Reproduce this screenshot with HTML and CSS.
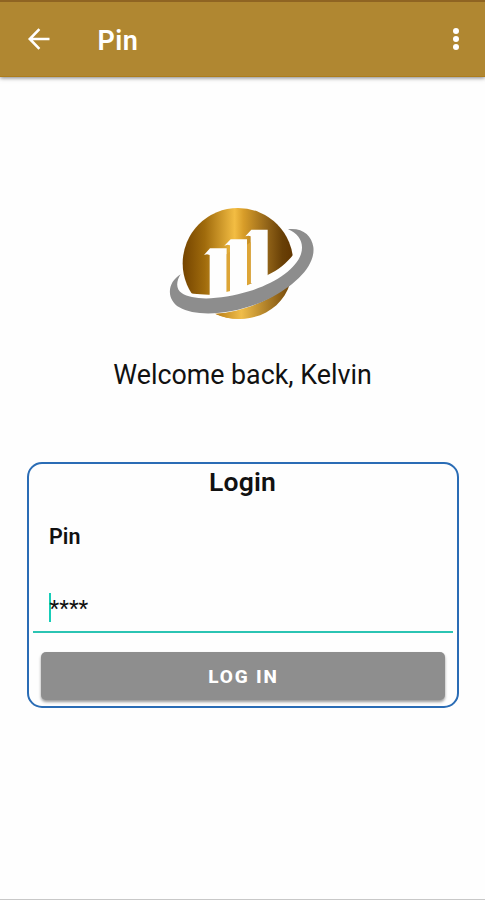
FILE: index.html
```html
<!DOCTYPE html>
<html lang="en">
<head>
    <meta charset="UTF-8">
    <title>Pin</title>
    <link rel="stylesheet" href="styles.css">
</head>
<body>
<div class="screen">
    <header class="bar">
        <svg class="back" viewBox="0 0 24 24">
            <path d="M22.5 12H3.2M12.4 2.2L2.8 12l9.6 9.8"/>
        </svg>
        <h1 class="title">Pin</h1>
        <svg class="more" viewBox="0 0 8 24">
            <circle cx="4" cy="4" r="3"/>
            <circle cx="4" cy="12" r="3"/>
            <circle cx="4" cy="20" r="3"/>
        </svg>
    </header>
    <main class="content">
        <svg class="logo" viewBox="0 0 495 405">
            <defs>
                <linearGradient id="gold" x1="0" y1="0" x2="1" y2="0">
                    <stop offset="0" stop-color="#744400"/>
                    <stop offset=".2" stop-color="#a06b0c"/>
                    <stop offset=".47" stop-color="#f3bd43"/>
                    <stop offset=".55" stop-color="#d89d29"/>
                    <stop offset=".76" stop-color="#936519"/>
                    <stop offset=".9" stop-color="#694006"/>
                    <stop offset="1" stop-color="#603500"/>
                </linearGradient>
                <linearGradient id="goldLow" x1="0" y1="0" x2="1" y2="0">
                    <stop offset="0" stop-color="#b67b16"/>
                    <stop offset=".35" stop-color="#f0bd49"/>
                    <stop offset="1" stop-color="#74480a"/>
                </linearGradient>
            </defs>
            <circle cx="234" cy="205" r="166" fill="url(#gold)"/>
            <!-- bars -->
            <g class="white">
                <path d="M132 180l18-20h50v145h-51V180l-8-2z"/>
                <path d="M193 152l19-19h49v160h-51V151l-7-2z"/>
                <path d="M256 124l18-20h49v160h-51V124l-7-2z"/>
            </g>
            <path class="edge" d="M200 178l10-8v118l-10 4zM261 149l11-8v124l-11 5z"/>
            <!-- gap between the globe and the ring -->
            <path class="white" d="M62 232C30 268 50 300 150 299C225 291 275 268 323 240C355 225 380 205 402 176L425 205L395 273C320 325 240 352 165 358L55 340L20 280z"/>
            <path d="M165 356C250 351 330 316 390 266C370 330 310 371 240 372C211 372 186 366 165 356z" fill="url(#goldLow)"/>
            <!-- ring -->
            <path class="ring" d="M62 238C48 259 47 283 66 295C99 318 188 314 267 289C344 265 407 224 423 177C433 145 418 116 384 103C428 98 455 122 460 156C467 211 408 270 325 312C239 355 116 371 58 337C18 312 21 263 62 238z"/>
        </svg>
        <p class="welcome">Welcome back, Kelvin</p>
        <section class="card">
            <h2 class="heading">Login</h2>
            <div class="label">Pin</div>
            <div class="field"><i class="caret"></i><span class="value">****</span></div>
            <button class="btn">LOG IN</button>
        </section>
    </main>
</div>
</body>
</html>
```

FILE: styles.css
```css
* {
    box-sizing: border-box;
    margin: 0;
    padding: 0;
}

body {
    font-family: Roboto, "Liberation Sans", sans-serif;
    color: #111;
    background: #fefefe;
}

.screen {
    display: flex;
    flex-direction: column;
    height: 900px;
    border-bottom: 1px solid #c8c8c8;
}

.bar {
    display: flex;
    align-items: center;
    height: 77px;
    padding: 0 25px 1px 27px;
    border-top: 2px solid #8f6422;
    border-bottom: 1px solid #ad7d1c;
    background: #b08731;
    box-shadow: 0 1px 4px rgba(0, 0, 0, .5);
}

.back {
    width: 24px;
    height: 24px;
    fill: none;
    stroke: #fff;
    stroke-width: 2.6;
}

.title {
    flex: 1;
    margin-left: 46.5px;
    padding-top: 4px;
    font-size: 27px;
    font-weight: 600;
    letter-spacing: .4px;
    line-height: 32px;
    color: #fff;
}

.more {
    width: 8px;
    height: 24px;
    fill: #fff;
}

.content {
    display: flex;
    flex-direction: column;
    align-items: center;
    padding-top: 118px;
}

.logo {
    width: 165px;
    height: 135px;
}

.white {
    fill: #fefefe;
}

.edge {
    fill: #dda536;
}

.ring {
    fill: #8d8d8d;
}

.welcome {
    margin-top: 29px;
    font-size: 26.8px;
    line-height: 32px;
}

.card {
    width: 432px;
    height: 246px;
    margin-top: 71px;
    padding: 0 4px;
    border: 2px solid #2a6cb5;
    border-radius: 15px;
}

.heading {
    font-size: 26.5px;
    font-weight: 600;
    letter-spacing: .2px;
    line-height: 36px;
    text-align: center;
}

.label {
    margin: 24px 0 0 16.5px;
    font-size: 21.5px;
    font-weight: 600;
    line-height: 26px;
}

.field {
    display: flex;
    align-items: center;
    height: 52px;
    margin-top: 31px;
    padding: 2px 0 0 16px;
    border-bottom: 2px solid #2bc4b3;
}

.caret {
    width: 2px;
    height: 29px;
    margin-right: -1px;
    background: #17cdb8;
}

.value {
    padding-top: 2px;
    font-size: 22.5px;
    line-height: 28px;
}

.btn {
    display: block;
    width: 404px;
    height: 48px;
    margin: 19px 0 0 8px;
    padding-left: 2px;
    border: 0;
    border-radius: 5px;
    background: #8e8e8e;
    box-shadow: 0 2px 3px rgba(0, 0, 0, .4);
    font-family: inherit;
    font-size: 19px;
    font-weight: 800;
    letter-spacing: 1.8px;
    color: #fff;
}
```
